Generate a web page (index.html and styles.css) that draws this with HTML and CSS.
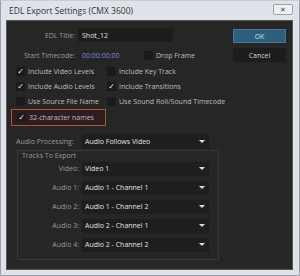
FILE: index.html
```html
<!DOCTYPE html>
<html lang="en">
<head>
    <meta charset="UTF-8">
    <title>EDL Export Settings</title>
    <link rel="stylesheet" href="styles.css">
</head>
<body>
    <div class="window">
        <div class="titlebar">
            <span class="title">EDL Export Settings (CMX 3600)</span>
            <span class="close">&#10005;</span>
        </div>
        <div class="content">
            <div class="top">
                <div class="form">
                    <div class="row row-title">
                        <span class="label">EDL Title:</span>
                        <span class="input">Shot_12</span>
                    </div>
                    <div class="row row-tc">
                        <span class="label">Start Timecode:</span>
                        <span class="timecode">00:00:00:00</span>
                        <span class="check drop"><i class="box"></i>Drop Frame</span>
                    </div>
                    <div class="checks">
                        <span class="check"><i class="box on"></i>Include Video Levels</span>
                        <span class="check"><i class="box"></i>Include Key Track</span>
                        <span class="check"><i class="box on"></i>Include Audio Levels</span>
                        <span class="check"><i class="box on"></i>Include Transitions</span>
                        <span class="check"><i class="box"></i>Use Source File Name</span>
                        <span class="check"><i class="box"></i>Use Sound Roll/Sound Timecode</span>
                    </div>
                    <div class="highlight">
                        <span class="check"><i class="box on"></i>32-character names</span>
                    </div>
                </div>
                <div class="buttons">
                    <span class="btn ok">OK</span>
                    <span class="btn">Cancel</span>
                </div>
            </div>
            <div class="row row-audio">
                <span class="label">Audio Processing:</span>
                <span class="select">Audio Follows Video</span>
            </div>
            <div class="group">
                <div class="legend">Tracks To Export</div>
                <div class="row track"><span class="label">Video:</span><span class="select">Video 1</span></div>
                <div class="row track"><span class="label">Audio 1:</span><span class="select">Audio 1 - Channel 1</span></div>
                <div class="row track"><span class="label">Audio 2:</span><span class="select">Audio 1 - Channel 2</span></div>
                <div class="row track"><span class="label">Audio 3:</span><span class="select">Audio 2 - Channel 1</span></div>
                <div class="row track"><span class="label">Audio 4:</span><span class="select">Audio 2 - Channel 2</span></div>
            </div>
        </div>
    </div>
</body>
</html>
```

FILE: styles.css
```css
*{box-sizing:border-box;margin:0;padding:0;}
body{width:300px;height:276px;background:#fff;font-family:'Open Sans','Noto Sans',sans-serif;font-size:7px;white-space:nowrap;}
.window{width:300px;height:276px;padding:0 6px 6px 5px;background:#dfe2e9;border:1px solid #9aa0aa;border-top-color:#c9ccd3;}
.titlebar{display:flex;align-items:center;justify-content:space-between;height:19px;padding:0 0 0 3px;}
.title{color:#333;font-size:8.5px;}
.close{display:flex;align-items:center;justify-content:center;width:20px;height:11px;margin-top:-2px;border:1px solid #9da2ab;border-radius:2px;background:#eef0f4;color:#444;font-size:7px;}
.content{height:250px;padding-top:7px;background:#262626;border:1px solid #555;color:#c4c4c4;}
.top{display:flex;justify-content:space-between;}
.form{width:220px;}
.row{display:flex;align-items:center;height:14px;}
.label{width:71px;padding-right:3px;text-align:right;color:#9a9a9a;}
.input{display:flex;align-items:center;width:95px;height:14px;padding-left:4px;background:#1d1d1d;color:#e0e0e0;}
.row-tc{margin-top:6px;}
.timecode{width:66px;padding-left:4px;color:#7d86de;}
.check{display:flex;align-items:center;height:15px;color:#bdbdbd;}
.box{display:flex;align-items:center;justify-content:center;width:9px;height:9px;margin-right:3px;background:#1a1a1a;font-style:normal;color:#f0f0f0;font-size:8px;font-family:'DejaVu Sans',sans-serif;}
.box.on::before{content:'\2713';}
.checks{display:grid;grid-template-columns:91px 1fr;margin-top:2px;padding-left:9px;}
.highlight{width:95px;height:17px;margin-left:4px;padding-left:5px;border:1px solid #a45a2a;background:#2e1c20;}
.highlight .check{height:15px;}
.buttons{display:flex;flex-direction:column;gap:5px;padding-top:1px;padding-right:6px;}
.btn{display:flex;align-items:center;justify-content:center;width:53px;height:14px;background:#1d1d1d;color:#d0d0d0;}
.btn.ok{background:#2f5f7f;border:1px solid #4a7694;color:#c9dbe7;}
.row-audio{margin-top:8px;}
.row-audio .label{width:75px;padding-left:9px;text-align:left;}
.select{display:flex;align-items:center;justify-content:space-between;width:127px;height:14px;padding:0 4px 0 3px;background:#1e1e1e;color:#e2e2e2;}
.select::after{content:'';border-left:3px solid transparent;border-right:3px solid transparent;border-top:3px solid #ddd;}
.group{width:202px;height:110px;margin:2px 0 0 10px;border:1px solid #383838;}
.legend{display:flex;align-items:center;height:8px;padding-left:4px;color:#9a9a9a;}
.track{height:19px;}
.track .label{width:64px;}
```
